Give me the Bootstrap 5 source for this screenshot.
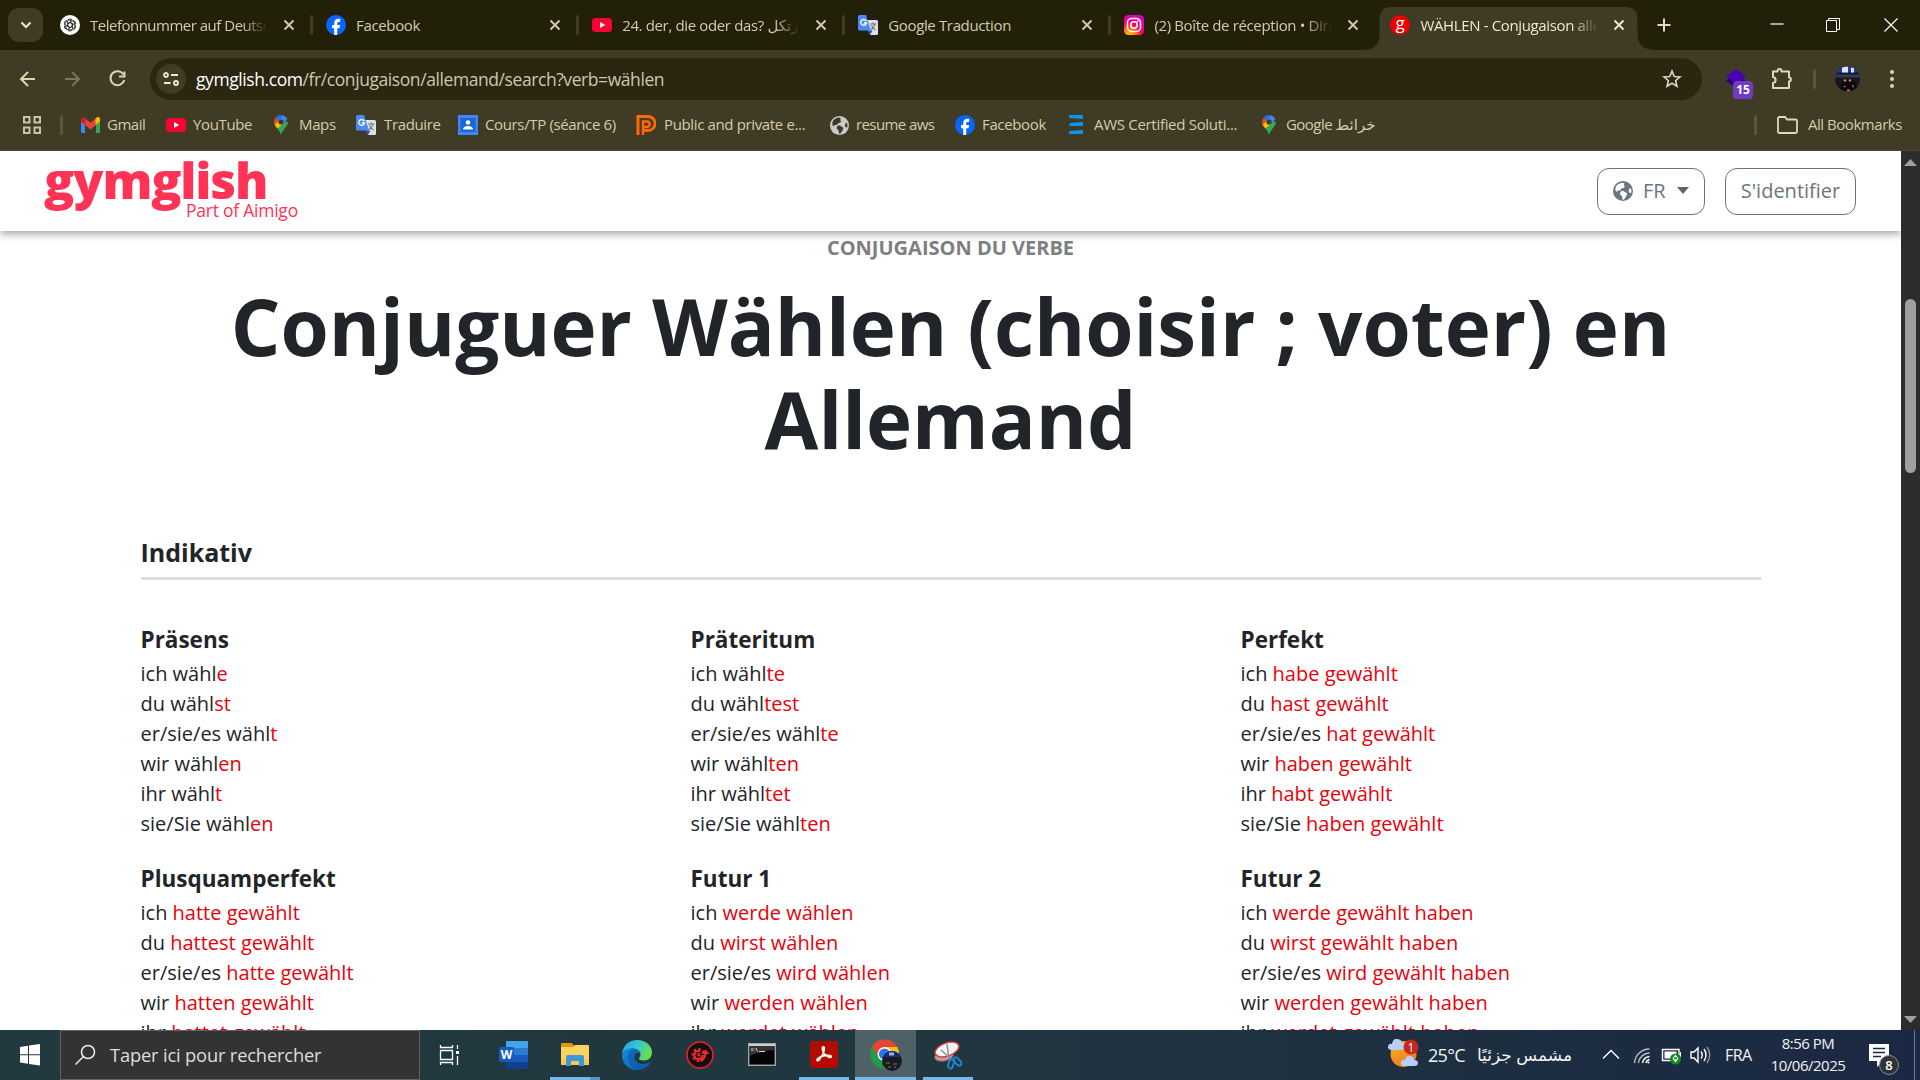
<!DOCTYPE html>
<html lang="fr">
<head>
<meta charset="utf-8">
<title>WÄHLEN - Conjugaison allemande</title>
<link href="https://cdn.jsdelivr.net/npm/bootstrap@5.3.0/dist/css/bootstrap.min.css" rel="stylesheet">
<style>
body{width:1920px;height:1080px;overflow:hidden;font-family:"Open Sans","Noto Sans","DejaVu Sans",sans-serif;color:#212529;background:#fff}
svg{display:block;flex:none}
.chrome{font-family:"Open Sans","DejaVu Sans",sans-serif;color:#d3cbab;background:#403b25;height:151px;border-bottom:1px solid #4c4735}
.strip{height:50px;background:#222009;padding-left:8px}
.tabsearch{width:35px;height:34px;margin-top:8px;margin-right:9px;background:#403b25;border-radius:11px}
.btab{width:266.1px;height:50px;padding-left:8px;position:relative;font-size:15px;letter-spacing:-.36px}
.btab .ttl{width:178px;margin-left:10px;white-space:nowrap;overflow:hidden}
.btab .ttl.tight{letter-spacing:-.5px}
.fade-end{-webkit-mask-image:linear-gradient(90deg,#000 152px,transparent 178px);mask-image:linear-gradient(90deg,#000 152px,transparent 178px)}
.btab .shut{margin-left:15px}
.btab:not(.current):not(.before)::after{content:"";width:3px;height:20px;background:#403b25;border-radius:2px;position:absolute;right:5px;top:15px}
.btab.current{color:#eee7d2}
.btab.current .ttl,.btab.current svg{z-index:1}
.btab.current svg.tabshape{position:absolute;left:-19px;top:7px;z-index:0}
.toolbar{height:51px;padding-top:7px;background:#403b25}
.omni{width:1552px;height:42px;border-radius:21px;background:#2b2610;font-size:17.5px;letter-spacing:-.42px;color:#cdc6ae}
.siteinfo{width:30px;height:30px;border-radius:50%;background:#403b25;margin:0 7px 0 6px}
.bm{font-size:15px;letter-spacing:-.36px;height:30px;white-space:nowrap}
.bm span{margin-top:-2px}
.vbar{width:3px;height:20px;background:#5c553a;border-radius:2px}
.extbadge{position:absolute;left:8px;top:13px;width:20px;height:18px;border-radius:4px;background:#6f3bc4;color:#fff;font-size:12px;font-weight:700;line-height:18px;text-align:center}
.viewport{height:879px;overflow:hidden}
.pane{width:1901px;height:879px;overflow:hidden}
.site-head{height:80px;box-shadow:0 3px 8px rgba(0,0,0,.36);padding:0 45px 0 44px;position:relative;z-index:2}
.logo{width:260px;height:80px;color:#ff3355}
.logo .big{font-size:50px;font-weight:800;line-height:50px;letter-spacing:-1.2px;padding-top:4px;height:47px}
.logo .tag{font-size:17.5px;line-height:24px;margin-left:142px;letter-spacing:-.24px;white-space:nowrap}
.hbtn{height:47px;border-radius:12px;font-size:20px;line-height:28px;color:#6c757d;border:1px solid #6c757d;background:#fff;padding:0 14px 2px;white-space:nowrap}
.kicker{font-size:20px;line-height:30px;color:#7d7f80;padding-top:2px;margin-bottom:17px}
.headline{font-size:78px;line-height:93px;font-weight:700;margin:0 0 71px}
.mood{width:1620px;margin:0 auto}
.mood h2{font-size:25px;line-height:30px;font-weight:700;padding-bottom:10px;border-bottom:3px solid #dcddd6;margin:0 0 44px}
.tenses{display:grid;grid-template-columns:repeat(3,550px)}
.tense{height:239px;font-size:20px;line-height:30px;white-space:nowrap}
.tense h3{font-size:22.5px;line-height:30px;font-weight:700;margin:0;padding:1px 0 4px}
.tense b{font-weight:400;color:#e8000b}
.sbar{width:19px;background:#2c2c2c;padding:8px 0 7px}
.thumb{width:11px;height:174px;border-radius:6px;background:#9f9f9f;margin-top:133px}
.task{height:50px;background:linear-gradient(90deg,#22393f 0,#21373f 45%,#1c2e41 80%,#1b2843 100%);color:#f2f2f2}
.find{width:360px;height:50px;border:1px solid #626262;background:#333;font-size:18.3px;letter-spacing:-.16px;color:#ddd}
.ti{width:62.15px;height:50px;position:relative}
.ti.run::after{content:"";position:absolute;left:6px;right:6px;bottom:0;height:3px;background:#76b9ed}
.ti.on{background:#4d6167;width:61px;margin-right:1px}
.ti.on::after{left:0;right:0}
.ti.multi::after{background:linear-gradient(90deg,#76b9ed 80%,#5b93c2 80%)}
.clock{font-size:15px;line-height:22.5px;letter-spacing:-.5px;width:90px;margin:-2px 0 0 8px}
.nbadge{position:absolute;left:10px;top:11px;width:20px;height:20px;border-radius:50%;background:#2f3238;border:1px solid #8a8d92;font-size:13px;font-weight:600;line-height:18px;text-align:center;color:#fff}
</style>
<script src="https://cdn.jsdelivr.net/npm/bootstrap@5.3.0/dist/js/bootstrap.bundle.min.js"></script>
</head>
<body>
<svg width="0" height="0" class="position-absolute">
<defs>
<symbol id="x" viewBox="0 0 12 12"><path d="M1.500 1.500l9 9M10.500 1.500l-9 9" stroke="currentColor" stroke-width="1.900" fill="none"/></symbol>
<symbol id="fb" viewBox="0 0 20 20"><circle cx="10" cy="10" r="10" fill="#0866ff"/><path d="M8.200 20v-6.800H6V10h2.200V8.600c0-3.300 1.500-4.800 4.300-4.800.6 0 1.300.1 1.700.2v2.900h-1.200c-1.300 0-1.800.6-1.800 1.800V10h2.900l-.5 3.200h-2.400V20z" fill="#fff"/></symbol>
<symbol id="yt" viewBox="0 0 20 20"><rect y="3" width="20" height="14" rx="3.500" fill="#ff0033"/><path d="M8 7l5.200 3L8 13z" fill="#fff"/></symbol>
<symbol id="tr" viewBox="0 0 20 20"><path d="M8 5h10.500a1.500 1.500 0 0 1 1.500 1.500v12a1.500 1.500 0 0 1-1.500 1.500H12z" fill="#dfe1e4"/><path d="M9.500 15.500h5L12 20z" fill="#2950b8"/><path d="M1.500 0H8l5 15.500H1.500A1.500 1.500 0 0 1 0 14V1.500A1.500 1.500 0 0 1 1.500 0z" fill="#4a8af4"/><path d="M8.300 6.200A2.900 2.900 0 1 0 8.500 8H5.900" stroke="#fff" stroke-width="1.300" fill="none"/><path d="M12 9h6.500M15 7.500V9M17 9c-.5 2.500-2 4-4 5.500M13.500 10.500c.8 2 2.300 3.500 4 4.500" stroke="#66707c" stroke-width="1.100" fill="none"/></symbol>
<symbol id="pin" viewBox="0 0 14 20"><path d="M7 20c-.8-3-2-4.500-3.500-6.600C1.500 10.700 0 9.500 0 7l4-4 6 3 4 1c0 2.500-1.500 4-3.300 6.400C9 15.500 7.800 17 7 20z" fill="#34a853"/><path d="M1.700 2.400A7 7 0 0 1 9 .3L4.700 5.500z" fill="#1a73e8"/><path d="M9 .3a7 7 0 0 1 4.300 3.700L9.200 8.800 4.700 5.500z" fill="#4285f4"/><path d="M1.700 2.400l3 3.100-4 4.600C-.5 7 .2 4.300 1.700 2.400z" fill="#ea4335"/><path d="M.7 10.100l4-4.600 4.600 3.300-5.800 4.700C2.300 12 1.200 11.200.7 10.100z" fill="#fbbc04"/><circle cx="7" cy="7" r="2.600" fill="#403b25"/></symbol>
<symbol id="globe" viewBox="0 0 20 20"><circle cx="10" cy="10" r="10" fill="currentColor"/><path d="M2.500 6.500C4 3 6.500 2 10 1.700l1.500 1.100-1 1.700 1.500.8-1.500 1.700-2 .5-1.500 2h-2.500v1.500l-2-1.200zM7.500 10.500l2.500-.7 2.700 1.700 1.500.8-1 3-2.200 3.200-1.500.2-.5-3.500-2-2zM17 6.500l1.300 2 .2 2.800-1.500 1-1.500-2.300z" fill="var(--hole)"/></symbol>
</defs>
</svg>

<header class="chrome">
  <div class="strip d-flex">
    <div class="tabsearch d-flex align-items-center justify-content-center"><svg width="12" height="8" viewBox="0 0 12 8"><path d="M1.500 1.500L6 6l4.500-4.500" stroke="#eee6c8" stroke-width="2.200" fill="none"/></svg></div>
    <div class="btab d-flex align-items-center"><svg width="20" height="20" viewBox="0 0 20 20"><circle cx="10" cy="10" r="10" fill="#fff"/><g fill="none" stroke="#222" stroke-width=".9"><path id="knot" d="M9.800 12.300L7.600 11V6.600a2.700 2.700 0 0 1 4.700-1.700M7.600 6.800a2.700 2.700 0 0 0-2.800 3"/><use href="#knot" transform="rotate(60 10 10)"/><use href="#knot" transform="rotate(120 10 10)"/><use href="#knot" transform="rotate(180 10 10)"/><use href="#knot" transform="rotate(240 10 10)"/><use href="#knot" transform="rotate(300 10 10)"/></g></svg><span class="ttl tight fade-end">Telefonnummer auf Deutsch</span><svg class="shut" width="12" height="12"><use href="#x"/></svg></div>
    <div class="btab d-flex align-items-center"><svg width="20" height="20"><use href="#fb"/></svg><span class="ttl">Facebook</span><svg class="shut" width="12" height="12"><use href="#x"/></svg></div>
    <div class="btab d-flex align-items-center"><svg width="20" height="20"><use href="#yt"/></svg><span class="ttl fade-end">24. der, die oder das? أُرتكل</span><svg class="shut" width="12" height="12"><use href="#x"/></svg></div>
    <div class="btab d-flex align-items-center"><svg width="20" height="20"><use href="#tr"/></svg><span class="ttl">Google Traduction</span><svg class="shut" width="12" height="12"><use href="#x"/></svg></div>
    <div class="btab before d-flex align-items-center"><svg width="20" height="20" viewBox="0 0 20 20"><defs><radialGradient id="ig" cx=".25" cy="1.050" r="1.150"><stop offset="0" stop-color="#ffd600"/><stop offset=".3" stop-color="#ff7a00"/><stop offset=".55" stop-color="#ff0169"/><stop offset="1" stop-color="#d300c5"/></radialGradient></defs><rect width="20" height="20" rx="4.500" fill="url(#ig)"/><rect x="3.500" y="3.500" width="13" height="13" rx="4" fill="none" stroke="#fff" stroke-width="1.500"/><circle cx="10" cy="10" r="3.200" fill="none" stroke="#fff" stroke-width="1.500"/><circle cx="13.800" cy="6.200" r=".9" fill="#fff"/></svg><span class="ttl fade-end">(2) Boîte de réception • Direct</span><svg class="shut" width="12" height="12"><use href="#x"/></svg></div>
    <div class="btab current d-flex align-items-center"><svg class="tabshape" width="292" height="43" viewBox="0 0 292 43"><path d="M0 43c10 0 16.500-5 16.500-15V12q0-12 12-12h234q12 0 12 12v16c0 10 7.500 15 17.500 15z" fill="#403b25"/></svg><svg width="20" height="20" viewBox="0 0 20 20"><circle cx="10" cy="10" r="10" fill="#ee0000"/><text x="10" y="14" text-anchor="middle" font-family="Open Sans" font-size="17" fill="#fff">g</text></svg><span class="ttl fade-end">WÄHLEN - Conjugaison allemande</span><svg class="shut" width="12" height="12"><use href="#x"/></svg></div>
    <div class="d-flex align-items-center" style="margin-left:8px;height:50px"><svg width="14" height="14" viewBox="0 0 14 14"><path d="M7 .5v13M.5 7h13" stroke="#e3dbb8" stroke-width="2"/></svg></div>
    <div class="d-flex align-items-center ms-auto text-white" style="padding-right:22px">
      <svg width="14" height="14" viewBox="0 0 14 14"><path d="M.5 6h13" stroke="#fff" stroke-width="1.200"/></svg>
      <svg width="14" height="14" viewBox="0 0 14 14" style="margin-left:42px" fill="none" stroke="#fff"><path d="M.5 2.500h10v11H.5zM2.500 2.500v-2h11v11h-3"/></svg>
      <svg width="14" height="14" viewBox="0 0 14 14" style="margin-left:44px"><path d="M.5.5l13 13M13.500.5l-13 13" stroke="#fff" stroke-width="1.200"/></svg>
    </div>
  </div>
  <div class="toolbar d-flex align-items-center">
    <svg width="150" height="42" viewBox="0 0 150 42" fill="none" stroke="#ddd5b0" stroke-width="2"><path d="M35 21H21M28 14l-7 7 7 7"/><path d="M65 21h14M72 14l7 7-7 7" stroke="#7d7658"/><path d="M123.500 16.500a7 7 0 1 0 .8 5.500M124.500 13.500v5h-5.500"/></svg>
    <div class="omni d-flex align-items-center">
      <div class="siteinfo d-flex align-items-center justify-content-center"><svg width="16" height="16" viewBox="0 0 16 16" fill="none" stroke="#efe8d0" stroke-width="1.800"><circle cx="3" cy="4" r="2"/><path d="M8 4h7M1 12h6.500"/><circle cx="13" cy="12" r="2"/></svg></div>
      <span class="flex-grow-1" style="margin-left:3px"><span class="text-white">gymglish.com</span>/fr/conjugaison/allemand/search?verb=wählen</span>
      <svg width="20" height="20" viewBox="0 0 20 20" style="margin-right:20px"><path d="M10 2.200l2.200 5.300 5.700.5-4.300 3.700 1.300 5.600-4.900-3-4.900 3 1.300-5.600L2.100 8l5.700-.5z" fill="none" stroke="#d8d1bd" stroke-width="1.700"/></svg>
    </div>
    <div class="position-relative" style="margin-left:23px"><svg width="22" height="22" viewBox="0 0 22 22"><path d="M1 13l10-7 9 7-9 7z" fill="#26007a"/><path d="M1 8.500L11 1l10 7.500L11 16z" fill="#4a00b4"/></svg><span class="extbadge">15</span></div>
    <svg width="24" height="24" viewBox="0 0 24 24" style="margin-left:22px" fill="none" stroke="#e0d8b2" stroke-width="2"><path d="M4 4.500h4.500c0-3.300 4-3.300 4 0H20v6c2.500 0 2.500 4 0 4V21H4v-5c3.500-.5 3.500-5.500 0-6z" stroke-linejoin="round"/></svg>
    <i class="vbar" style="margin-left:20px"></i>
    <svg width="25" height="30" viewBox="0 0 25 25" style="margin-left:19px"><defs><clipPath id="av"><circle cx="12.500" cy="12.500" r="12.500"/></clipPath></defs><g clip-path="url(#av)"><path d="M0 0h25v25H0z" fill="#15191f"/><path d="M0 0h25v6H0z" fill="#1639c8"/><path d="M7 0h6v6H7zM16 1h3v5h-3z" fill="#dfe7ff"/><path d="M0 8h25v3H0z" fill="#333c48"/><path d="M5 24l2-8 4-3 3 2 3-2 4 4 1 8z" fill="#07080a"/><circle cx="10" cy="14" r="1.200" fill="#cf8b6c"/><circle cx="15" cy="14" r="1.200" fill="#c47e60"/><path d="M8 20l2-1 1 2zM17 18l2 1-1 3zM12 23h3v2h-3z" fill="#c97556"/></g></svg>
    <svg width="6" height="20" viewBox="0 0 6 20" style="margin-left:29px" fill="#ddd5b0"><circle cx="3" cy="3" r="2"/><circle cx="3" cy="10" r="2"/><circle cx="3" cy="17" r="2"/></svg>
  </div>
  <nav class="d-flex align-items-center" style="padding:9px 18px 0 23px">
    <svg width="18" height="18" viewBox="0 0 18 18" fill="none" stroke="#c9c3ae" stroke-width="2"><path d="M1 1h5.500v5.500H1zM11.500 1H17v5.500h-5.500zM1 11.500h5.500V17H1zM11.500 11.500H17V17h-5.500z"/></svg>
    <i class="vbar" style="margin:0 18px 0 19px"></i>
    <div class="bm d-flex align-items-center" style="width:85px"><svg width="19" height="16" viewBox="0 0 19 14" preserveAspectRatio="none"><path d="M0 2v11q0 1 1 1h3V6z" fill="#4285f4"/><path d="M15 6v8h3q1 0 1-1V2z" fill="#34a853"/><path d="M4 1v6l5.500 4L15 7V1L9.500 5z" fill="#ea4335"/><path d="M0 2Q0-.5 3 .3L4.500 1.500V7L0 4z" fill="#c5221f"/><path d="M19 2q0-2.500-3-1.700L14.500 1.500V7L19 4z" fill="#fbbc04"/></svg><span style="margin-left:7px;letter-spacing:-.5px">Gmail</span></div>
    <div class="bm d-flex align-items-center" style="width:108px"><svg width="20" height="20"><use href="#yt"/></svg><span style="margin-left:7px">YouTube</span></div>
    <div class="bm d-flex align-items-center" style="width:82px"><svg width="14" height="20"><use href="#pin"/></svg><span style="margin-left:11px">Maps</span></div>
    <div class="bm d-flex align-items-center" style="width:102px"><svg width="20" height="20"><use href="#tr"/></svg><span style="margin-left:8px">Traduire</span></div>
    <div class="bm d-flex align-items-center" style="width:178px"><svg width="20" height="20" viewBox="0 0 20 20"><path d="M0 0h20v20H0z" fill="#4285f4"/><path d="M2.500 3h15v14h-15z" fill="#1967d2"/><circle cx="10" cy="7.500" r="2.300" fill="#fff"/><path d="M5 14.500q0-3.500 5-3.500t5 3.500z" fill="#fff"/></svg><span style="margin-left:7px">Cours/TP (séance 6)</span></div>
    <div class="bm d-flex align-items-center" style="width:194px"><svg width="20" height="20" viewBox="0 0 20 20"><path d="M2 20V1.500h10a6 6 0 0 1 0 14H8" fill="none" stroke="#ff6a00" stroke-width="3"/><path d="M7 20V6.500h4a2.700 2.700 0 0 1 0 5.500H7" fill="none" stroke="#ff6a00" stroke-width="2.500"/></svg><span style="margin-left:8px">Public and private e...</span></div>
    <div class="bm d-flex align-items-center" style="width:125px;--hole:#403b25"><svg width="19" height="19" viewBox="0 0 20 20" color="#cbcbcf"><use href="#globe"/></svg><span style="margin-left:7px;letter-spacing:-.6px">resume aws</span></div>
    <div class="bm d-flex align-items-center" style="width:114px"><svg width="20" height="20"><use href="#fb"/></svg><span style="margin-left:7px">Facebook</span></div>
    <div class="bm d-flex align-items-center" style="width:193px"><svg width="14" height="20" viewBox="0 0 14 20" fill="#0a95f0"><path d="M0 0h14v4l-14-1zM1 8l13-1v4H0zM0 16l14-1v4H0z"/></svg><span style="margin-left:11px;letter-spacing:-.3px">AWS Certified Soluti...</span></div>
    <div class="bm d-flex align-items-center"><svg width="14" height="20"><use href="#pin"/></svg><span style="margin-left:10px;letter-spacing:-.55px" dir="ltr">Google خرائط</span></div>
    <i class="vbar ms-auto" style="margin-right:20px"></i>
    <div class="bm d-flex align-items-center"><svg width="21" height="18" viewBox="0 0 21 18"><path d="M1 2.500Q1 1 2.500 1H8l2 2.500h8.500Q20 3.500 20 5v10.500q0 1.500-1.500 1.500h-16Q1 17 1 15.500z" fill="none" stroke="#ddd6c0" stroke-width="1.800"/></svg><span style="margin-left:10px;letter-spacing:-.45px">All Bookmarks</span></div>
  </nav>
</header>

<div class="viewport d-flex">
  <main class="pane">
    <div class="site-head bg-white d-flex align-items-start">
      <div class="logo"><div class="big">gymglish</div><div class="tag">Part of Aimigo</div></div>
      <div class="d-flex ms-auto" style="gap:20px;margin-top:17px">
        <button class="hbtn d-flex align-items-center" style="width:108px;--hole:#fff"><svg width="20" height="20" viewBox="0 0 20 20" style="margin-left:1px"><use href="#globe"/></svg><span style="margin-left:10px">FR</span><svg width="12" height="7" viewBox="0 0 12 7" class="ms-auto" style="margin-right:1px"><path d="M0 0h12L6 7z" fill="#5d666e"/></svg></button>
        <button class="hbtn d-flex align-items-center justify-content-center" style="width:131px">S'identifier</button>
      </div>
    </div>
    <div class="text-center">
      <div class="kicker fw-bold">CONJUGAISON DU VERBE</div>
      <h1 class="headline">Conjuguer Wählen (choisir ; voter) en<br>Allemand</h1>
    </div>
    <section class="mood">
      <h2>Indikativ</h2>
      <div class="tenses">
        <div class="tense"><h3>Präsens</h3><div>ich wähl<b>e</b></div><div>du wähl<b>st</b></div><div>er/sie/es wähl<b>t</b></div><div>wir wähl<b>en</b></div><div>ihr wähl<b>t</b></div><div>sie/Sie wähl<b>en</b></div></div>
        <div class="tense"><h3>Präteritum</h3><div>ich wähl<b>te</b></div><div>du wähl<b>test</b></div><div>er/sie/es wähl<b>te</b></div><div>wir wähl<b>ten</b></div><div>ihr wähl<b>tet</b></div><div>sie/Sie wähl<b>ten</b></div></div>
        <div class="tense"><h3>Perfekt</h3><div>ich <b>habe gewählt</b></div><div>du <b>hast gewählt</b></div><div>er/sie/es <b>hat gewählt</b></div><div>wir <b>haben gewählt</b></div><div>ihr <b>habt gewählt</b></div><div>sie/Sie <b>haben gewählt</b></div></div>
        <div class="tense"><h3>Plusquamperfekt</h3><div>ich <b>hatte gewählt</b></div><div>du <b>hattest gewählt</b></div><div>er/sie/es <b>hatte gewählt</b></div><div>wir <b>hatten gewählt</b></div><div>ihr <b>hattet gewählt</b></div></div>
        <div class="tense"><h3>Futur 1</h3><div>ich <b>werde wählen</b></div><div>du <b>wirst wählen</b></div><div>er/sie/es <b>wird wählen</b></div><div>wir <b>werden wählen</b></div><div>ihr <b>werdet wählen</b></div></div>
        <div class="tense"><h3>Futur 2</h3><div>ich <b>werde gewählt haben</b></div><div>du <b>wirst gewählt haben</b></div><div>er/sie/es <b>wird gewählt haben</b></div><div>wir <b>werden gewählt haben</b></div><div>ihr <b>werdet gewählt haben</b></div></div>
      </div>
    </section>
  </main>
  <div class="sbar d-flex flex-column align-items-center">
    <svg width="13" height="7" viewBox="0 0 13 7"><path d="M0 7h13L6.500 0z" fill="#9f9f9f"/></svg>
    <div class="thumb"></div>
    <svg class="mt-auto" width="13" height="7" viewBox="0 0 13 7"><path d="M0 0h13L6.500 7z" fill="#9f9f9f"/></svg>
  </div>
</div>

<footer class="task d-flex align-items-center">
  <svg width="60" height="50" viewBox="0 0 60 50" fill="#fff"><path d="M20 17l8-1.200v8.500H20zM29 15.600l11-1.600v10.300H29zM20 25.300h8v8.500l-8-1.200zM29 25.300h11v10.200l-11-1.600z"/></svg>
  <div class="find d-flex align-items-center"><svg width="22" height="22" viewBox="0 0 22 22" style="margin:0 12px 0 13px"><circle cx="14" cy="8" r="6.500" fill="none" stroke="#eee" stroke-width="1.500"/><path d="M9.500 12.500L1.500 20.500" stroke="#eee" stroke-width="1.500"/></svg><span style="margin-left:2px">Taper ici pour rechercher</span></div>
  <div class="ti d-flex align-items-center justify-content-center"><svg width="22" height="20" viewBox="0 0 22 20" fill="none" stroke="#fff" stroke-width="1.300" style="margin-right:2px"><path d="M1.500 5.500h12v9h-12zM1.500 0v2.500h12V0M1.500 20v-2.500h12V20M18.500 0v4M18.500 11v9"/><path d="M17 6h3v3h-3z" fill="#fff" stroke="none"/></svg></div>
  <div class="ti d-flex align-items-center justify-content-center"><svg width="29" height="28" viewBox="0 0 29 28"><path d="M8 0h20q1 0 1 1v6H7V1q0-1 1-1z" fill="#41a5ee"/><path d="M7 7h22v7H7z" fill="#2b7cd3"/><path d="M7 14h22v7H7z" fill="#185abd"/><path d="M7 21h22v6q0 1-1 1H8q-1 0-1-1z" fill="#103f91"/><rect y="6" width="15" height="15" rx="1.500" fill="#185abd"/><text x="7.500" y="18" text-anchor="middle" font-family="Open Sans" font-weight="700" font-size="12" fill="#fff">W</text></svg></div>
  <div class="ti run multi d-flex align-items-center justify-content-center"><svg width="28" height="24" viewBox="0 0 28 24" style="margin-bottom:2px"><path d="M0 2q0-1 1-1h10l3 4H0z" fill="#e09a00"/><path d="M0 5h12l2-2h13q1 0 1 1v19H0z" fill="#ffd45e"/><path d="M0 17h28v6H0z" fill="#f8c94c"/><path d="M5 24V15q0-2 2-2h14q2 0 2 2v9h-5v-5h-8v5z" fill="#3f97dc"/></svg></div>
  <div class="ti d-flex align-items-center justify-content-center"><svg width="30" height="30" viewBox="0 0 30 30"><defs><linearGradient id="e1" x2="1" y2=".35"><stop offset="0" stop-color="#249fe6"/><stop offset=".5" stop-color="#37c3d8"/><stop offset="1" stop-color="#62e052"/></linearGradient><linearGradient id="e2" x2="1" y2="1"><stop offset="0" stop-color="#1590df"/><stop offset="1" stop-color="#0b55a4"/></linearGradient></defs><path d="M0 14C1 5.500 7 0 15 0c9 0 15 6 15 12.500 0 5-3.500 8-8 8-3.500 0-5-1-5-2s1.500-1.500 1.500-4c0-3-3-6-7.500-6C5.500 8.500 2 10.500 0 14z" fill="url(#e1)"/><path d="M0 15C1 11 5.500 8.500 11 8.500c4 0 7 2.300 7.500 5-1.500-2-6-1.500-6.300 3-.2 4.500 3.800 8 9.300 7.500 2.500-.2 4.700-1.200 6.200-1.800.7-.2 1 .3.600.9C25.500 27 21 30 15 30 7 30 0 24 0 15z" fill="url(#e2)"/><path d="M11 9c-7 3-8 14 4.500 21 5.500-.3 10-3 12.500-6.500-7 4-15 1-15.500-6.500-.1-3 1.500-5 4-5.200Q14 9 11 9z" fill="#0d5fae" opacity=".75"/></svg></div>
  <div class="ti d-flex align-items-center justify-content-center"><svg width="28" height="28" viewBox="0 0 28 28"><circle cx="14" cy="14" r="13" fill="#111" stroke="#f01e2c" stroke-width="1.500"/><g fill="none" stroke="#f0272f"><circle cx="12.500" cy="14" r="4.200" stroke-width="2.300" stroke-dasharray="21 5.400"/><circle cx="12.500" cy="14" r="6" stroke-width="2" stroke-dasharray="2.500 2.210" stroke-dashoffset="1"/><path d="M12.500 12v2.500h2M14.500 20q5-2 4.800-8.500" stroke-width="2"/><path d="M15 13l4.500-4.500L23.500 13z" fill="#f0272f" stroke="none"/></g></svg></div>
  <div class="ti d-flex align-items-center justify-content-center"><svg width="28" height="23" viewBox="0 0 28 23" style="margin-bottom:2px"><rect x=".7" y=".7" width="26.600" height="21.600" fill="#050505" stroke="#9fa7ab" stroke-width="1.400"/><path d="M1 1h26v2H1z" fill="#c9ced1"/><path d="M2 3h24v4Q10 8 2 13z" fill="#333"/><path d="M4 5v3M6 5.500v.8M6 7.500v.8M8 5l1.500 3.500M11 8.500h6" stroke="#ddd"/></svg></div>
  <div class="ti run d-flex align-items-center justify-content-center"><svg width="28" height="27" viewBox="0 0 28 27" style="margin-bottom:2px"><rect width="28" height="27" rx="4" fill="#b30b00"/><path d="M13.300 5.800c1.700 0 1 4.200-.7 7.700s-4.300 7-5.400 6 2.300-3.800 6-4.700 8.300-.5 8 .9-3.900.4-6.400-2.400-3.100-7.500-1.500-7.500z" fill="none" stroke="#fff" stroke-width="1.700"/></svg></div>
  <div class="ti run on d-flex align-items-center justify-content-center"><svg width="32" height="32" viewBox="0 0 32 32" style="margin-left:2px"><circle cx="14.500" cy="15" r="14.500" fill="#1e9e49"/><path d="M2 7.500A14.500 14.500 0 0 1 27.200 8H14.500L8.500 18z" fill="#ea4335"/><path d="M27.200 8q3.600 7-.5 14.200T14 29.500L20.500 19l.5-4-6.500-7z" fill="#fbc116"/><circle cx="14.500" cy="15" r="7" fill="#fff"/><circle cx="14.500" cy="15" r="5.600" fill="#2f74e8"/><circle cx="22" cy="22" r="10" fill="#171b22"/><path d="M14 16q8-8 16 0v2H14z" fill="#152c73"/><path d="M19 13.500h5v3h-5z" fill="#9fb2dc"/><path d="M16 24h4M23 25h4M18 28h3M24 28h2" stroke="#6e4e3d" stroke-width="1.500"/></svg></div>
  <div class="ti run d-flex align-items-center justify-content-center"><svg width="30" height="29" viewBox="0 0 30 29"><ellipse cx="11" cy="15" rx="9.500" ry="5" fill="#a4a7aa" stroke="#c44" stroke-width=".8" transform="rotate(-12 11 15)"/><ellipse cx="14" cy="8.500" rx="12.500" ry="6.500" fill="#f5f5f5" stroke="#e03535" stroke-width="1.400" transform="rotate(-20 14 8.500)"/><path d="M14 3l2 15M8 9l10 9" stroke="#8b9095" stroke-width="1.500"/><g fill="none" stroke="#1b86d1" stroke-width="2"><ellipse cx="18" cy="23" rx="2.500" ry="4.800" transform="rotate(15 18 23)"/><ellipse cx="24.500" cy="20.500" rx="2.500" ry="5" transform="rotate(-40 24.500 20.500)"/></g></svg></div>

  <div class="d-flex align-items-center ms-auto">
    <svg width="31" height="30" viewBox="0 0 31 30" style="margin-bottom:2px"><defs><linearGradient id="sun" x2=".6" y2="1"><stop offset="0" stop-color="#f7b52c"/><stop offset="1" stop-color="#f0791c"/></linearGradient></defs><circle cx="15.500" cy="15" r="13" fill="url(#sun)"/><path d="M3 11q-4-1-3-4 1-3 4-2 1-6 6-5 4 1 4 4 4 0 4 3 0 4-4 4z" fill="#b8cef5"/><path d="M16 27q-4 0-3-4 1-3 4-2 1-5 6-4 3 1 3 4 4 0 4 3t-4 3z" fill="#b8cef5"/><circle cx="23" cy="8" r="7.500" fill="#c9261f"/><text x="23" y="12.500" text-anchor="middle" font-family="Open Sans" font-size="12" fill="#fff">1</text></svg>
    <span style="font-size:18px;letter-spacing:-.7px;margin-left:9px;width:39px;white-space:nowrap">25°C</span>
    <span dir="rtl" style="font-size:17px;margin-left:9px;width:96px;white-space:nowrap">مشمس جزئيًا</span>
    <svg width="140" height="26" viewBox="0 0 140 26" style="margin-left:22px" fill="none" stroke="#fff" stroke-width="1.400"><path d="M9 16.500l8-8 8 8"/><g transform="translate(40 5)"><path d="M.5 16A15 15 0 0 1 15.500 2M4.500 16A11 11 0 0 1 15.500 6" stroke="#b4bcc6"/><path d="M8.500 16A8 8 0 0 1 15.500 9.500M12 16a4.500 4.500 0 0 1 3.500-3.500"/><circle cx="14.500" cy="15.500" r="1" fill="#fff" stroke="none"/></g><path d="M68.500 7.500h16.500v11h-16.500z"/><path d="M70.500 9.500h12v7h-12z" fill="#fff" stroke="none"/><path d="M86 10h1v5h-1z" fill="#fff" stroke="none"/><circle cx="81.500" cy="17" r="5.500" fill="#0f8a1d" stroke="none"/><path d="M81.500 13.500l2.300 3-2.300 3-2.300-3zM81.500 17v3" stroke-width="1.100"/><path d="M97 10h3l4-4v14l-4-4h-3z"/><path d="M107 9.500q2.500 3.500 0 7M110 7q4 6 0 12"/><path d="M113 5q5.500 8 0 16" stroke="#8893a5"/></svg>
    <span style="font-size:16px;letter-spacing:-.6px;margin-left:-9px;width:30px">FRA</span>
    <div class="clock text-center">8:56 PM<br>10/06/2025</div>
    <div class="position-relative" style="margin-left:16px;width:20px"><svg width="20" height="23" viewBox="0 0 20 23"><path d="M0 0h20v17h-6l-6 6v-6H0z" fill="#fff"/><path d="M4 4.500h12M4 8.500h12M4 12.500h8" stroke="#1b2843" stroke-width="1.500"/></svg><span class="nbadge">8</span></div>
    <i style="width:1px;height:50px;background:#6f7988;margin:0 5px 0 25px"></i>
  </div>
</footer>
</body>
</html>
